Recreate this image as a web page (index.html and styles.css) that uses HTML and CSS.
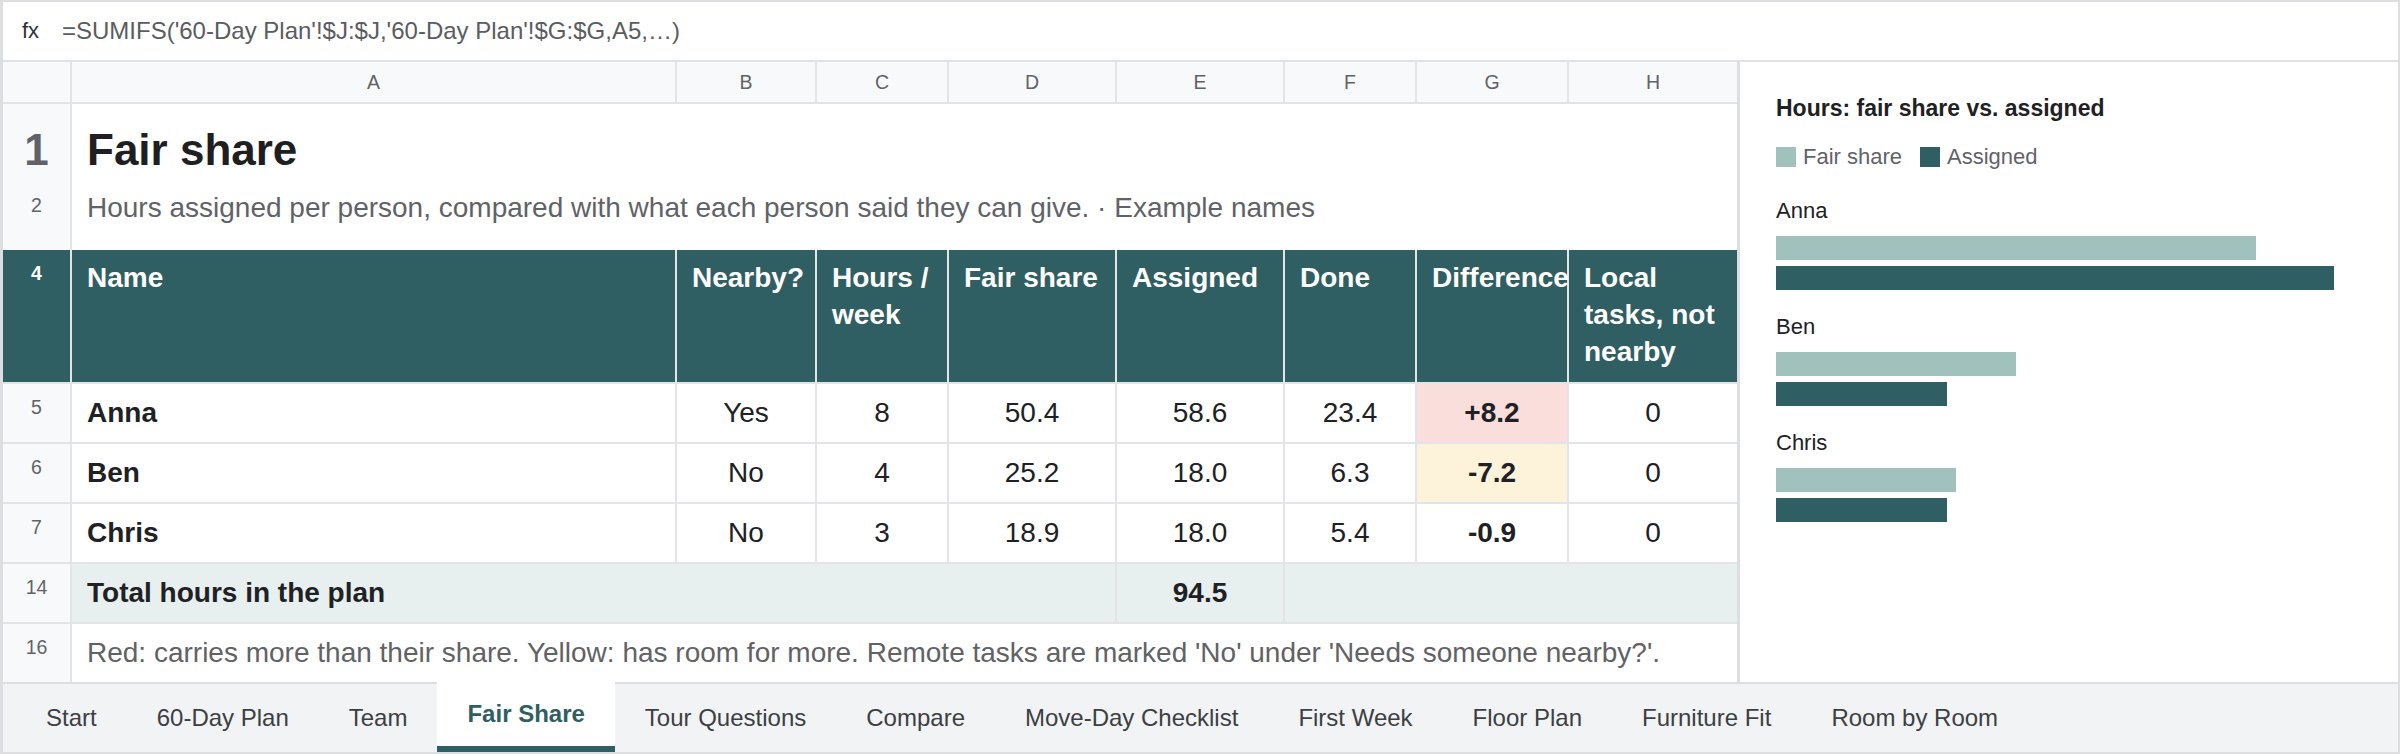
FILE: index.html
```html
<!DOCTYPE html>
<html lang="en">
<head>
<meta charset="utf-8">
<title>Fair Share</title>
<link rel="stylesheet" href="styles.css">
</head>
<body>
<div class="app">
  <div class="formula">
    <span class="fx">fx</span>
    <span class="ftext">=SUMIFS('60-Day Plan'!$J:$J,'60-Day Plan'!$G:$G,A5,…)</span>
  </div>
  <div class="main">
    <div class="sheet">
      <div class="row colhead">
        <div class="corner"></div>
        <div class="ch">A</div><div class="ch">B</div><div class="ch">C</div><div class="ch">D</div>
        <div class="ch">E</div><div class="ch">F</div><div class="ch">G</div><div class="ch">H</div>
      </div>
      <div class="row r-title">
        <div class="rh">1</div>
        <div class="cell span-all title">Fair share</div>
      </div>
      <div class="row r-sub">
        <div class="rh">2</div>
        <div class="cell span-all sub">Hours assigned per person, compared with what each person said they can give. · Example names</div>
      </div>
      <div class="row r-head sep">
        <div class="rh">4</div>
        <div class="cell">Name</div>
        <div class="cell">Nearby?</div>
        <div class="cell">Hours / week</div>
        <div class="cell">Fair share</div>
        <div class="cell">Assigned</div>
        <div class="cell">Done</div>
        <div class="cell">Difference</div>
        <div class="cell">Local tasks, not nearby</div>
      </div>
      <div class="row r-data sep">
        <div class="rh">5</div>
        <div class="cell name">Anna</div>
        <div class="cell num">Yes</div>
        <div class="cell num">8</div>
        <div class="cell num">50.4</div>
        <div class="cell num">58.6</div>
        <div class="cell num">23.4</div>
        <div class="cell num diff over">+8.2</div>
        <div class="cell num">0</div>
      </div>
      <div class="row r-data sep">
        <div class="rh">6</div>
        <div class="cell name">Ben</div>
        <div class="cell num">No</div>
        <div class="cell num">4</div>
        <div class="cell num">25.2</div>
        <div class="cell num">18.0</div>
        <div class="cell num">6.3</div>
        <div class="cell num diff under">-7.2</div>
        <div class="cell num">0</div>
      </div>
      <div class="row r-data sep">
        <div class="rh">7</div>
        <div class="cell name">Chris</div>
        <div class="cell num">No</div>
        <div class="cell num">3</div>
        <div class="cell num">18.9</div>
        <div class="cell num">18.0</div>
        <div class="cell num">5.4</div>
        <div class="cell num diff">-0.9</div>
        <div class="cell num">0</div>
      </div>
      <div class="row r-data r-total sep">
        <div class="rh">14</div>
        <div class="cell name span-4">Total hours in the plan</div>
        <div class="cell num strong">94.5</div>
        <div class="cell span-3"></div>
      </div>
      <div class="row r-data">
        <div class="rh">16</div>
        <div class="cell span-all note">Red: carries more than their share. Yellow: has room for more. Remote tasks are marked 'No' under 'Needs someone nearby?'.</div>
      </div>
    </div>
    <aside class="chart">
      <h2 class="chart-title">Hours: fair share vs. assigned</h2>
      <div class="legend">
        <span class="legend-item"><span class="sw sw-fair"></span>Fair share</span>
        <span class="legend-item"><span class="sw sw-assigned"></span>Assigned</span>
      </div>
      <div class="group">
        <div class="label">Anna</div>
        <div class="bar bar-fair" style="width:81.91%"></div>
        <div class="bar bar-assigned" style="width:95.24%"></div>
      </div>
      <div class="group">
        <div class="label">Ben</div>
        <div class="bar bar-fair" style="width:40.96%"></div>
        <div class="bar bar-assigned" style="width:29.25%"></div>
      </div>
      <div class="group">
        <div class="label">Chris</div>
        <div class="bar bar-fair" style="width:30.72%"></div>
        <div class="bar bar-assigned" style="width:29.25%"></div>
      </div>
    </aside>
  </div>
  <nav class="tabs">
    <span class="tab">Start</span>
    <span class="tab">60-Day Plan</span>
    <span class="tab">Team</span>
    <span class="tab active">Fair Share</span>
    <span class="tab">Tour Questions</span>
    <span class="tab">Compare</span>
    <span class="tab">Move-Day Checklist</span>
    <span class="tab">First Week</span>
    <span class="tab">Floor Plan</span>
    <span class="tab">Furniture Fit</span>
    <span class="tab">Room by Room</span>
  </nav>
</div>
</body>
</html>
```
FILE: styles.css
```css
html, body {
  margin: 0;
  padding: 0;
}

body {
  width: 2400px;
  height: 754px;
  font-family: "Liberation Sans", Arial, Helvetica, sans-serif;
  color: #202124;
  background: #ffffff;
}

.app {
  box-sizing: border-box;
  width: 2400px;
  height: 754px;
  border: 2px solid #dcdee1;
  border-left-width: 3px;
  display: flex;
  flex-direction: column;
}

/* formula bar */
.formula {
  height: 58px;
  flex: none;
  border-bottom: 2px solid #e0e2e5;
  display: flex;
  align-items: center;
  padding-left: 19px;
  font-size: 22px;
  background: #fff;
}

.fx {
  color: #303134;
  width: 40px;
}

.ftext {
  color: #5a5c60;
  font-size: 24px;
}

/* main area */
.main {
  flex: 1;
  display: flex;
  min-height: 0;
}

.sheet {
  width: 1734px;
  flex: none;
  background: #e2e4e7;
  border-right: 3px solid #dcdee1;
  display: flex;
  flex-direction: column;
}

.row {
  display: grid;
  grid-template-columns: 67px 603px 138px 130px 166px 166px 130px 150px 168px;
  column-gap: 2px;
}

.row.sep {
  margin-bottom: 2px;
}

.colhead {
  height: 40px;
  margin-bottom: 2px;
}

.corner,
.ch {
  background: #f8f9fa;
}

.ch {
  display: flex;
  align-items: center;
  justify-content: center;
  font-size: 19.5px;
  color: #5f6368;
}

.rh {
  background: #f8f9fa;
  color: #5f6368;
  text-align: center;
  font-size: 19.5px;
  line-height: 27px;
  padding-top: 10px;
  box-sizing: border-box;
}

.cell {
  background: #ffffff;
  padding: 0 15px;
  font-size: 28px;
  min-width: 0;
}

.span-all { grid-column: span 8; }
.span-4 { grid-column: span 4; }
.span-3 { grid-column: span 3; }

/* title rows */
.r-title {
  height: 83px;
}

.r-title .rh {
  font-size: 44px;
  line-height: 52px;
  font-weight: bold;
  padding-top: 20px;
}

.title {
  font-size: 44px;
  line-height: 52px;
  font-weight: bold;
  padding-top: 20px;
  color: #1f1f21;
}

.r-sub {
  height: 63px;
}

.r-sub .rh {
  padding-top: 5px;
}

.sub {
  line-height: 37px;
  padding-top: 2px;
  color: #5f6368;
}

/* header row */
.r-head {
  height: 132px;
}

.r-head .rh {
  background: #2f5e63;
  color: #ffffff;
  font-weight: bold;
}

.r-head .cell {
  background: #2f5e63;
  color: #ffffff;
  font-weight: bold;
  line-height: 37px;
  padding: 9px 6px 0 15px;
}

/* data rows */
.r-data {
  height: 58px;
}

.r-data .cell {
  display: flex;
  align-items: center;
}

.name {
  font-weight: bold;
}

.num {
  justify-content: center;
}

.diff,
.strong {
  font-weight: bold;
}

.over {
  background: #f9dedb !important;
}

.under {
  background: #fdf2da !important;
}

.r-total .cell {
  background: #e8efef;
}

.note {
  color: #616264;
}

/* chart panel */
.chart {
  flex: 1;
  background: #ffffff;
  padding: 30px 36px 0;
  min-width: 0;
}

.chart-title {
  margin: 0;
  font-size: 23px;
  line-height: 32px;
  font-weight: bold;
  color: #202124;
}

.legend {
  margin-top: 18px;
  height: 30px;
  display: flex;
  align-items: center;
  gap: 18px;
}

.legend-item {
  display: flex;
  align-items: center;
  gap: 7px;
  font-size: 22px;
  color: #5f6368;
}

.sw {
  width: 20px;
  height: 20px;
  display: inline-block;
}

.sw-fair,
.bar-fair {
  background: #a1c1bd;
}

.sw-assigned,
.bar-assigned {
  background: #2f5e63;
}

.group {
  margin-top: 22px;
}

.legend + .group {
  margin-top: 24px;
}

.label {
  font-size: 22px;
  line-height: 30px;
  color: #202124;
  margin-bottom: 10px;
}

.bar {
  height: 24px;
}

.bar + .bar {
  margin-top: 6px;
}

/* tabs */
.tabs {
  height: 68px;
  flex: none;
  border-top: 2px solid #dcdee1;
  background: #f1f3f4;
  display: flex;
  padding-left: 13px;
}

.tab {
  display: flex;
  align-items: center;
  padding: 0 30px;
  font-size: 24px;
  color: #3c4043;
  white-space: nowrap;
}

.tab.active {
  background: #ffffff;
  color: #2f5e63;
  font-weight: bold;
  margin-top: -2px;
  border-bottom: 6px solid #2f5e63;
}
```
